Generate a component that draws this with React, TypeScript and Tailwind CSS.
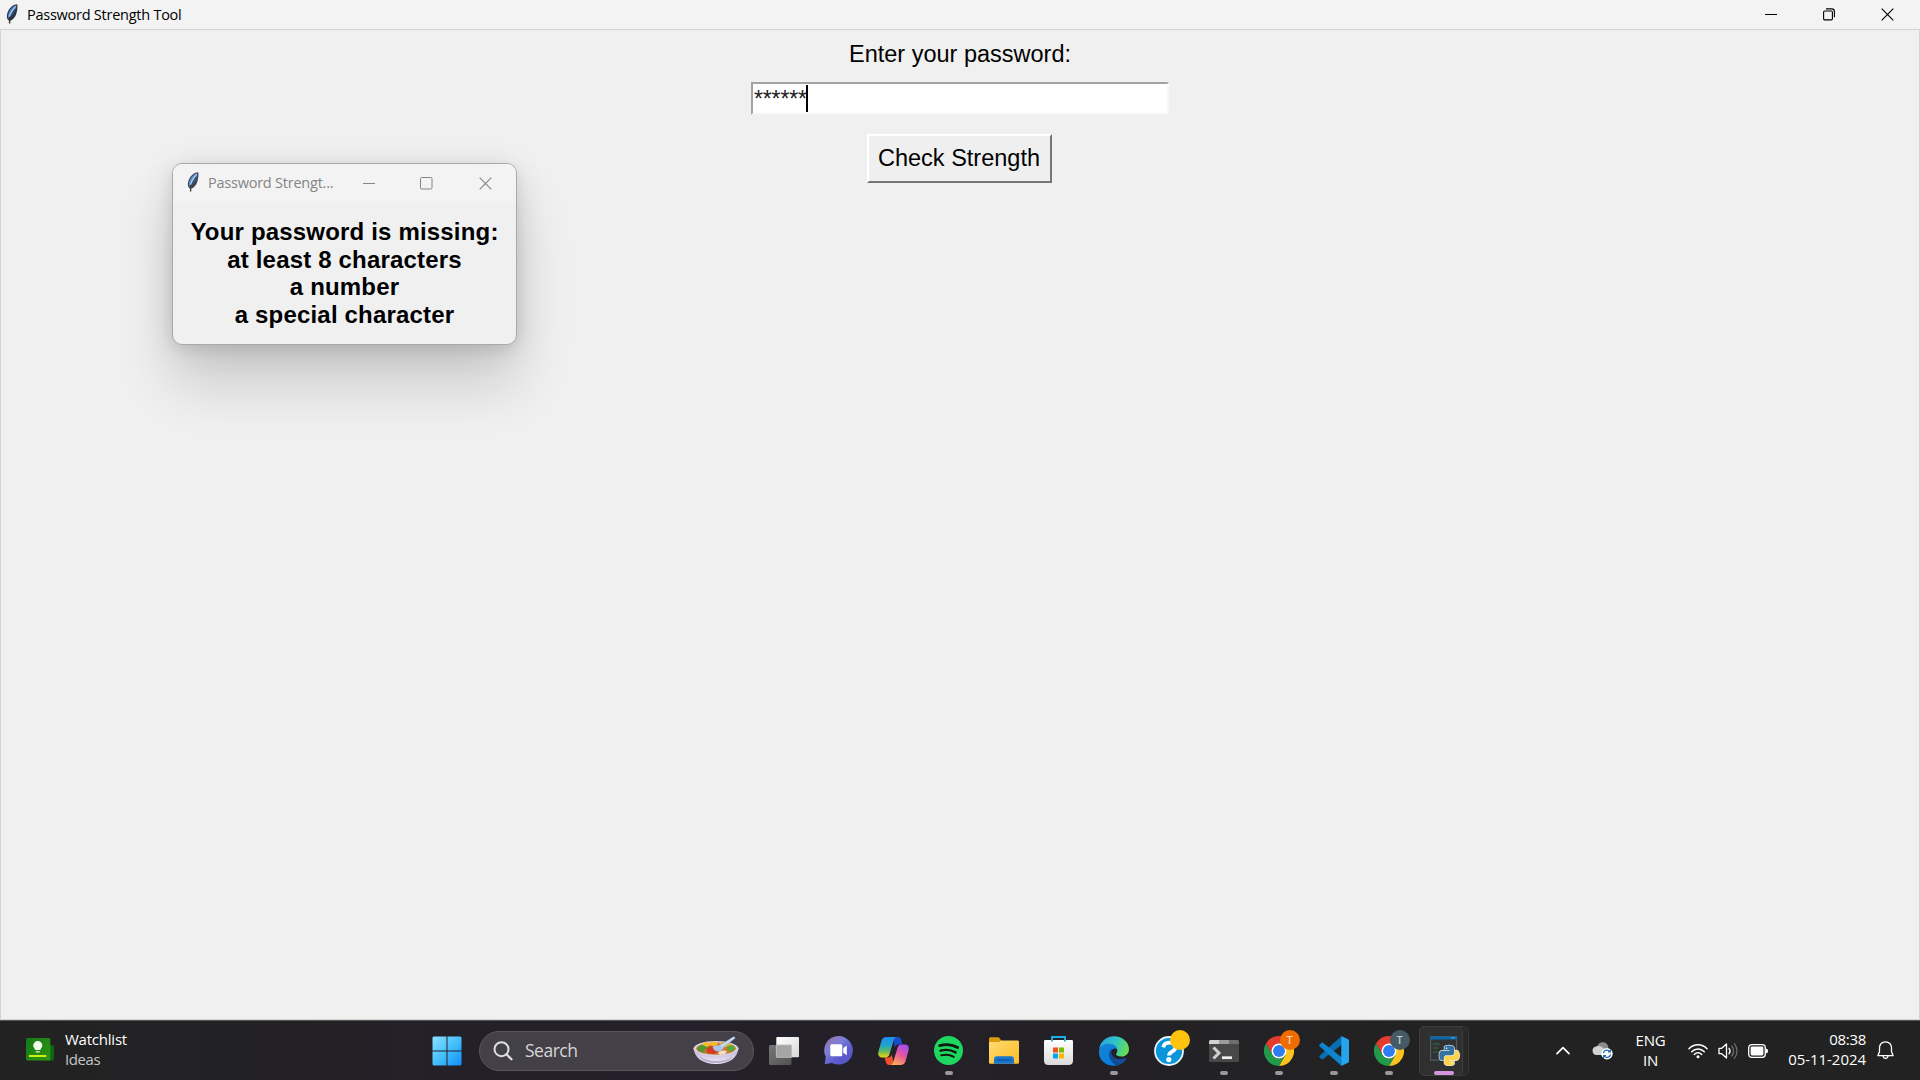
import type { ReactNode } from "react";

const UI = "font-['Open_Sans','Noto_Sans',sans-serif]";
const ARIAL = "font-['Liberation_Sans',Arial,sans-serif]";

function Feather() {
  return (
    <svg width="12" height="20" viewBox="0 0 12 20" className="block shrink-0">
      <path d="M11.300.3C8 .2 4 3 2 7.500.8 10.200.4 13 1.600 15.500L3.700 17c3-1 5.800-4 6.800-7.800.9-3.200 1.200-6.200.8-8.900z" fill="#2b3440" />
      <path d="M10.500 1.300C7.500 1.800 4.300 4.800 2.800 8.500c-.9 2.200-1 4.500-.3 6C5.500 13 9.800 7 10.500 1.300z" fill="#4a86cf" />
      <path d="M9.500 2.300C7.500 4.500 4.500 8.500 3.300 12.500" stroke="#b3cdea" strokeWidth="1.100" fill="none" />
      <path d="M9 5C7 9 5 12 3.500 14.500" stroke="#1f2a38" strokeWidth=".9" fill="none" />
      <path d="M3.600 13v6.500" stroke="#34312e" strokeWidth="1.400" />
    </svg>
  );
}

function Minimize() {
  return (
    <svg width="12" height="13" viewBox="0 0 12 13" className="block">
      <path d="M0 6.500h12" stroke="currentColor" />
    </svg>
  );
}
function Restore() {
  return (
    <svg width="12" height="13" viewBox="0 0 12 13" className="block" fill="none" stroke="currentColor" strokeWidth="1.100">
      <rect x=".6" y="3" width="8.800" height="8.900" rx="1.200" />
      <path d="M3 .9h5.700c1.800 0 2.700 1 2.700 2.700v5.700" />
    </svg>
  );
}
function Maximize() {
  return (
    <svg width="13" height="13" viewBox="0 0 13 13" className="block" fill="none" stroke="currentColor">
      <rect x=".5" y=".5" width="11.500" height="11.500" rx="1.200" />
    </svg>
  );
}
function Close() {
  return (
    <svg width="13" height="13" viewBox="0 0 13 13" className="block">
      <path d="M.7.700l11.600 11.600M12.300.700L.7 12.300" stroke="currentColor" strokeWidth="1.150" />
    </svg>
  );
}

function ResultDialog() {
  return (
    <section className="absolute left-[172px] top-[163px] h-[182px] w-[345px] rounded-[10px] border border-[#a9a9a9] bg-[#f0f0f0] shadow-[0_38px_56px_0_rgba(0,0,0,0.16),0_4px_32px_0_rgba(0,0,0,0.09),0_4px_14px_rgba(0,0,0,0.08)]">
      <header className="flex h-[39px] items-center rounded-t-[9px] bg-[#f3f3f3] pl-[14px] text-[#858585]">
        <div className="-mt-[3px] opacity-90"><Feather /></div>
        <span className={`-mt-[2px] ml-[9px] w-[148px] whitespace-nowrap text-[14.500px] tracking-[-0.230px] ${UI}`}>Password Strengt...</span>
        <div className="ml-[6px] flex w-[13px] shrink-0 justify-center"><Minimize /></div>
        <div className="ml-[45px] shrink-0"><Maximize /></div>
        <div className="ml-[46px] shrink-0"><Close /></div>
      </header>
      <p className={`-mx-1 pt-[15px] text-center text-[24px] font-bold leading-[27.600px] tracking-[0.180px] text-black ${ARIAL}`}>
        Your password is missing:<br />at least 8 characters<br />a number<br />a special character
      </p>
    </section>
  );
}

function Cell({ children, running }: { children: ReactNode; running?: boolean }) {
  return (
    <div className="relative flex h-[60px] w-[55px] shrink-0 items-center justify-center">
      {children}
      {running && <span className="absolute bottom-[6px] left-[24px] h-[4px] w-[8px] rounded-full bg-[#9a989d]" />}
    </div>
  );
}

function WatchlistIcon() {
  return (
    <svg width="28" height="23" viewBox="0 0 28 23" className="block">
      <rect x="20" y="7" width="8" height="15.500" rx="1.500" fill="#0c6614" />
      <rect width="24.300" height="22.500" rx="1.500" fill="url(#wl)" />
      <path d="M11.700 3a4.600 4.600 0 0 1 4.600 4.600c0 2-1.500 2.700-2 4.300H9.200c-.5-1.600-2-2.300-2-4.300A4.600 4.600 0 0 1 11.700 3z" fill="#effbe9" />
      <path d="M9.700 13.800h4" stroke="#d9f3cf" strokeWidth="1.300" />
      <path d="M3 18h17.200" stroke="#d2f010" strokeWidth="2" />
      <defs>
        <linearGradient id="wl" x1="0" y1="0" x2="1" y2="1"><stop stopColor="#127a16" /><stop offset="1" stopColor="#349510" /></linearGradient>
      </defs>
    </svg>
  );
}

function StartIcon() {
  return (
    <svg width="30" height="30" viewBox="0 0 30 30" className="block">
      <defs>
        <linearGradient id="st" x1="0" y1="0" x2="30" y2="30" gradientUnits="userSpaceOnUse"><stop stopColor="#8ee2ff" /><stop offset=".5" stopColor="#45c0fb" /><stop offset="1" stopColor="#0b8cf8" /></linearGradient>
      </defs>
      <path d="M1.500.500H14.500V14.500H.5V1.500zM15.500.500h13l1 1v13h-14zM.5 15.500h14v14h-13l-1-1zM15.500 15.500h14v13l-1 1h-13z" fill="url(#st)" />
    </svg>
  );
}

function BowlIcon() {
  return (
    <svg width="46" height="29" viewBox="0 0 46 29" className="block">
      <defs>
        <linearGradient id="bw" x1="0" y1="0" x2="0" y2="1"><stop stopColor="#b4abc8" /><stop offset="1" stopColor="#f1ecfa" /></linearGradient>
      </defs>
      <path d="M.5 12C1 21 9 28 23 28s22-7 22.500-16z" fill="url(#bw)" />
      <path d="M5 19c4 7 12 8 18 8s13-1 17-6c-6 3-10 4-17 4S9 23 5 19z" fill="#9689b5" opacity=".6" />
      <ellipse cx="23" cy="12.500" rx="22.500" ry="7.500" fill="#d9d1e8" />
      <ellipse cx="23" cy="12.600" rx="19.800" ry="6.200" fill="#cf7a2b" />
      <path d="M4 12c3-3 7-4 10-4l2 3-5 3 2 3C8 16 5 15 4 12z" fill="#4c9a30" />
      <path d="M9 8.500L13 5.500l3 2 3-2.300 6 2-2 3-6-1-3 1.800z" fill="#f4bc2a" />
      <path d="M26 8l4-2.200 6 1 5 3-6 1.500-6-1z" fill="#efae27" />
      <path d="M34 10l6-1 2.500 3-3 3.500-5-.5z" fill="#5aa637" />
      <path d="M13 13l5-3 7 2 .5 4-5 2-6-1z" fill="#d33a28" />
      <path d="M25 17c1-2 6-3.500 9-2l-2 3-5 .7z" fill="#f5dfc9" />
      <path d="M19.500 11c2-2 6-1 8.500-2.500L40.500.500l2 1.500-11 9c-2 1.500-2 4-5 4.500-4 .5-6-1.500-7-4.500z" fill="#a9c4e8" />
      <path d="M28 10.500L41.500 1.300" stroke="#e6f0ff" strokeWidth="1" />
    </svg>
  );
}

function TaskViewIcon() {
  return (
    <svg width="30" height="28" viewBox="0 0 30 28" className="block">
      <defs>
        <linearGradient id="tv" x1="0" y1="0" x2="1" y2="1"><stop stopColor="#fff" /><stop offset="1" stopColor="#d8d8d8" /></linearGradient>
        <linearGradient id="tw" x1="0" y1="0" x2="1" y2="1"><stop stopColor="#777" /><stop offset="1" stopColor="#505050" /></linearGradient>
      </defs>
      <rect y="8" width="22.500" height="20" rx="1.500" fill="url(#tw)" />
      <rect x="7.300" width="22.700" height="20.300" rx="1" fill="url(#tv)" />
      <path d="M7.300 8h15.200v12.300H7.300z" fill="#a5a5a5" stroke="#bcbcbc" strokeWidth=".8" />
    </svg>
  );
}

function ChatIcon() {
  return (
    <svg width="29" height="29" viewBox="0 0 29 29" className="block">
      <defs>
        <linearGradient id="ch" x1=".1" y1=".1" x2=".8" y2=".9"><stop stopColor="#9872b0" /><stop offset=".35" stopColor="#7b80d8" /><stop offset=".7" stopColor="#5d5bd0" /><stop offset="1" stopColor="#5757c4" /></linearGradient>
      </defs>
      <path d="M14.500 0A14.300 14.300 0 1 1 8 27L.7 28.300 1.800 21A14.300 14.300 0 0 1 14.500 0z" fill="url(#ch)" />
      <rect x="6.300" y="8.300" width="12" height="12" rx="1.500" fill="#fff" />
      <path d="M19.300 12l3.500-2.500v9.700l-3.500-2.500z" fill="#fff" />
    </svg>
  );
}

function CopilotIcon() {
  return (
    <svg width="31" height="28" viewBox="0 0 31 28" className="block">
      <defs>
        <linearGradient id="c1" x1="0" y1="0" x2="0" y2="1"><stop stopColor="#1c8ef0" /><stop offset=".4" stopColor="#1fa3d0" /><stop offset=".68" stopColor="#5cb960" /><stop offset="1" stopColor="#f3d30e" /></linearGradient>
        <linearGradient id="c2" x1=".7" y1="0" x2=".2" y2="1"><stop stopColor="#a44df0" /><stop offset=".45" stopColor="#e2569f" /><stop offset="1" stopColor="#ffb052" /></linearGradient>
      </defs>
      <path d="M15 0h5c2 0 2.800 1.200 3.300 3l1.200 4.500h-4c-2 0-3 1-3.700 3z" fill="#194cc8" />
      <path d="M16 28h-5c-2 0-2.600-1.300-3.200-3.200L6.500 20.500H10c2.200 0 3.200-1 3.900-3z" fill="#f1502f" />
      <path d="M8.500 0h9.800c-1.700.7-2.400 2.400-3 4.600l-4 13.200c-.7 2-2 2.700-4 2.700H4C.8 20.500-.4 18 .4 14.700L3.400 4C4.200 1.300 5.800 0 8.500 0z" fill="url(#c1)" />
      <path d="M22.500 28h-9.800c1.700-.7 2.400-2.400 3-4.600l4-13.200c.7-2 2-2.700 4-2.700H27c3.200 0 4.400 2.500 3.600 5.800l-3 10.700c-.8 2.700-2.400 4-5.100 4z" fill="url(#c2)" />
    </svg>
  );
}

function SpotifyIcon() {
  return (
    <svg width="29" height="29" viewBox="0 0 29 29" className="block" fill="none" stroke="#10170f" strokeLinecap="round">
      <circle cx="14.500" cy="14.500" r="14.500" fill="#1ed760" stroke="none" />
      <path d="M5.700 9.600c6-1.600 13-.9 18 1.900" strokeWidth="2.800" />
      <path d="M6.600 14.700c5.300-1.500 10.700-.7 15 1.700" strokeWidth="2.400" />
      <path d="M7.300 19.300c4.700-1.100 8.800-.6 12.500 1.500" strokeWidth="2" />
    </svg>
  );
}

function ExplorerIcon() {
  return (
    <svg width="30" height="27" viewBox="0 0 30 27" className="block">
      <defs>
        <linearGradient id="ex" x1="0" y1="0" x2="1" y2="1"><stop stopColor="#ffdc70" /><stop offset="1" stopColor="#fbbb27" /></linearGradient>
      </defs>
      <path d="M0 2C0 .8.600.300 1.600.300h7c1 0 1.500.4 2.200 1.200L12.600 4v5H0z" fill="#dc9b0c" />
      <path d="M0 5h10l2.500-1.500H28.500c1 0 1.500.500 1.500 1.500v20.300c0 1-.5 1.500-1.500 1.500h-27C.5 26.800 0 26.300 0 25.300z" fill="url(#ex)" />
      <path d="M5 26.800v-4.300c0-2.200 1-3.200 3-3.200h14c2 0 3 1 3 3.200v4.300z" fill="#1777cf" />
      <path d="M8.500 23h13" stroke="#0b4790" strokeWidth="1.200" strokeLinecap="round" />
    </svg>
  );
}

function StoreIcon() {
  return (
    <svg width="29" height="29" viewBox="0 0 29 29" className="block">
      <defs>
        <linearGradient id="sr" x1="0" y1="0" x2="0" y2="1"><stop stopColor="#fff" /><stop offset="1" stopColor="#dadada" /></linearGradient>
      </defs>
      <path d="M0 5.500C0 4.500.500 4 1.500 4h26c1 0 1.500.500 1.500 1.500v19c0 3-1.500 4.500-4.500 4.500h-20C1.500 29 0 27.500 0 24.500z" fill="url(#sr)" />
      <path d="M8 5.500V1h13v4.500" fill="none" stroke="#1dafe3" strokeWidth="1.900" />
      <path d="M9 11.500h5v5H9z" fill="#f25022" /><path d="M15 11.500h5v5h-5z" fill="#7fba00" />
      <path d="M9 17.500h5v5H9z" fill="#00a4ef" /><path d="M15 17.500h5v5h-5z" fill="#ffb900" />
    </svg>
  );
}

function EdgeIcon() {
  return (
    <svg width="30" height="30" viewBox="0 0 30 30" className="block">
      <defs>
        <linearGradient id="e1" x1="0" y1=".3" x2="1" y2=".6"><stop stopColor="#2aa5e0" /><stop offset=".5" stopColor="#30c3c8" /><stop offset="1" stopColor="#69e04c" /></linearGradient>
        <linearGradient id="e2" x1="0" y1="0" x2=".6" y2="1"><stop stopColor="#1484d4" /><stop offset="1" stopColor="#087ddc" /></linearGradient>
      </defs>
      <path d="M.3 12.500C1.500 5.300 7.500.2 15 .2c8.500 0 15 6 15 13 0 4.500-3.500 7.300-7.500 7.300-3.500 0-5.500-1-5.500-2.200 0-.8 1.300-1.500 1.300-3.800 0-3-3.800-5.600-8.300-5.600-4 0-7.500 1.600-9.700 3.600z" fill="url(#e1)" />
      <path d="M.2 13.500C1.500 9.500 6 7.500 10.500 7.700c4 .2 7.300 2.300 7.800 5.500-3-2-7.500.5-7.500 5.800 0 5 4 9.700 8 10.300C9 31.500-.7 25-.2 15z" fill="url(#e2)" />
      <path d="M12.500 13c-1.900 1.500-3 4-2.200 7.500 1.200 5 5.200 9 9.200 8.700 3.200-1 6-3.200 7.800-6.200.5-.8-.2-1.300-1-.9-6 2.700-13.800-.1-13.800-5.700 0-1.300.3-2.400 1-3.300z" fill="#124d9b" />
    </svg>
  );
}

function HelpIcon() {
  return (
    <span className="relative block">
      <svg width="30" height="30" viewBox="0 0 30 30" className="block">
        <circle cx="15" cy="15" r="14" fill="#0995da" stroke="#e9f5fb" strokeWidth="1.800" />
        <path d="M9.300 11.300c.6-3 2.700-4.600 6-4.600 3.700 0 6 1.800 6 4.800 0 4.500-6.300 3.900-6.300 8" fill="none" stroke="#fff" strokeWidth="3.800" />
        <circle cx="14.800" cy="23.600" r="2.600" fill="#fff" />
      </svg>
      <span className="absolute -top-[6px] left-[16px] size-5 rounded-full bg-[#ffc20e]" />
    </span>
  );
}

function TerminalIcon() {
  return (
    <svg width="30" height="22" viewBox="0 0 30 22" className="block">
      <rect width="30" height="22" rx="1.500" fill="#484848" />
      <path d="M0 4V1.500Q0 0 1.500 0H10v4z" fill="#d2d2d2" /><path d="M10 0h10v4H10z" fill="#9c9c9c" /><path d="M20 0h8.500Q30 0 30 1.500V4H20z" fill="#6e6e6e" />
      <path d="M4.500 7.500l5.500 5.500-5.500 5.500" fill="none" stroke="#d0d0d0" strokeWidth="3" />
      <path d="M13 17.700h10" stroke="#efefef" strokeWidth="2.700" />
    </svg>
  );
}

function ChromeIcon({ orange }: { orange?: boolean }) {
  return (
    <span className="relative block">
      <svg width="30" height="30" viewBox="0 0 48 48" className="block">
        <path d="M3.200 12A24 24 0 0 1 44.800 12H24L13.600 30z" fill="#e33b2e" />
        <path d="M44.800 12A24 24 0 0 1 24 48L34.400 30 24 12z" fill="#fcc31e" />
        <path d="M24 48A24 24 0 0 1 3.200 12L13.600 30A12 12 0 0 0 34.400 30z" fill="#239a4b" />
        <circle cx="24" cy="24" r="12" fill="#fff" />
        <circle cx="24" cy="24" r="9.500" fill="#2d7cf0" />
      </svg>
      <span className={`absolute -top-[6px] left-[16px] flex size-5 items-center justify-center rounded-full text-[11px] font-semibold leading-none ${UI} ${orange ? "bg-[#ef6c00] text-[#f9d7bb]" : "bg-[#455a64] text-[#c3cbcf]"}`}>T</span>
    </span>
  );
}

function CodeIcon() {
  return (
    <svg width="30" height="30" viewBox="0 0 30 30" className="block">
      <path d="M22.300.200L.8 19.500c-.7.600-.7 1.400 0 2l1.600 1.500c.5.500 1.200.5 1.800.1L23 8.500z" fill="#0a6eb5" />
      <path d="M22.300 29.800L.8 10.500c-.7-.6-.7-1.400 0-2L2.400 7c.5-.5 1.200-.5 1.800-.1L23 21.500z" fill="#0f84cc" />
      <path d="M22.300.100L29 3.200c.6.300 1 .8 1 1.500v20.600c0 .7-.4 1.200-1 1.500l-6.700 3.100z" fill="#25a6ec" />
    </svg>
  );
}

const SNAKE =
  "M14.25.18l.9.2.73.26.59.3.45.32.34.34.25.34.16.33.1.3.04.26.02.2-.01.13V8.5l-.05.63-.13.55-.21.46-.26.38-.3.31-.33.25-.35.19-.35.14-.33.1-.3.07-.26.04-.21.02H8.77l-.69.05-.59.14-.5.22-.41.27-.33.32-.27.35-.2.36-.15.37-.1.35-.07.32-.04.27-.02.21v3.06H3.17l-.21-.03-.28-.07-.32-.12-.35-.18-.36-.26-.36-.36-.35-.46-.32-.59-.28-.73-.21-.88-.14-1.05-.05-1.23.06-1.22.16-1.04.24-.87.32-.71.36-.57.4-.44.42-.33.42-.24.4-.16.36-.1.32-.05.24-.01h.16l.06.01h8.16v-.83H6.18l-.01-2.75-.02-.37.05-.34.11-.31.17-.28.25-.26.31-.23.38-.2.44-.18.51-.15.58-.12.64-.1.71-.06.77-.04.84-.02 1.27.05z";

function PythonTask() {
  return (
    <div className="relative h-[50px] w-[50px]">
      <span className="absolute inset-y-0 left-2 right-0 rounded-[5px] border border-[#363636] bg-[#292929]" />
      <span className="absolute inset-y-0 left-0 w-[44px] rounded-[5px] border border-[#3d3d3d] bg-[#303030]" />
      <svg width="30" height="30" viewBox="0 0 30 30" className="absolute left-[11px] top-[10px]">
        <path d="M.6.600h26v23.500H.6z" fill="#303235" stroke="#55585b" strokeWidth="1.200" />
        <path d="M0 .5h27V3.500H0z" fill="#0b68a9" />
        <path d="M21 2h4" stroke="#62a9d8" />
        <path d="M3 8h7M3 12h5M3 16h6" stroke="#32713a" strokeWidth="1.200" />
        <g transform="translate(9.300 9.500) scale(.83)">
          <path d={SNAKE} fill="#34719f" stroke="#e9edf0" strokeWidth="1.600" />
          <path d={SNAKE} fill="#fbd448" stroke="#e9edf0" strokeWidth="1.600" transform="rotate(180 12 12)" />
          <path d={SNAKE} fill="#34719f" />
          <path d={SNAKE} fill="#fbd448" transform="rotate(180 12 12)" />
          <circle cx="8.800" cy="3.200" r=".9" fill="#fff" />
          <circle cx="15.200" cy="20.800" r=".9" fill="#fff" />
        </g>
      </svg>
      <span className="absolute bottom-[1px] left-[15px] h-[4px] w-[20px] rounded-full bg-[#d595dd]" />
    </div>
  );
}

function CloudSync() {
  return (
    <svg width="21" height="19" viewBox="0 0 21 19" className="block">
      <path d="M5 6C6 2 9 .8 11.500 1.200c3 .4 4.500 2.600 5 5l-3 5z" fill="#8b8b8b" />
      <path d="M4.500 14A4.300 4.300 0 0 1 4 5.500C7.500 4 11 6 13 9l-1 5z" fill="#d2d2d2" />
      <circle cx="15" cy="12.700" r="5.700" fill="#fff" />
      <path d="M11.400 12a3.700 3.700 0 0 1 6.500-1.500M18.600 13.500a3.700 3.700 0 0 1-6.500 1.500M18.400 8.500v2.400H16M11.700 17v-2.400H14" fill="none" stroke="#1b69bd" strokeWidth="1.200" />
    </svg>
  );
}

function WifiIcon() {
  return (
    <svg width="20" height="16" viewBox="0 0 20 16" className="block" fill="none" stroke="#fff" strokeWidth="1.500" strokeLinecap="round">
      <path d="M1 5.700c5-5.300 13-5.300 18 0M3.700 8.700c3.500-3.700 9.100-3.700 12.600 0M6.300 11.400c2-2.100 5.400-2.100 7.400 0" />
      <circle cx="10" cy="13.700" r="1.500" fill="#fff" stroke="none" />
    </svg>
  );
}
function VolumeIcon() {
  return (
    <svg width="20" height="18" viewBox="0 0 20 18" className="block" fill="none" stroke="#fff" strokeWidth="1.300" strokeLinecap="round" strokeLinejoin="round">
      <path d="M1 6.300h2.700L8.500 2v14l-4.800-4.300H1z" />
      <path d="M11 6.300c1.300 1.600 1.300 3.800 0 5.400" />
      <path d="M13.700 4c2.300 3 2.300 7 0 10M16.300 1.700c3.600 4.400 3.600 10.200 0 14.600" stroke="#6c6c6c" />
    </svg>
  );
}
function BatteryIcon() {
  return (
    <svg width="20" height="14" viewBox="0 0 20 14" className="block">
      <rect x=".7" y=".7" width="16.600" height="12.600" rx="3" fill="none" stroke="#fff" strokeWidth="1.300" />
      <rect x="2.600" y="2.600" width="12.800" height="8.800" rx="1.300" fill="#fff" />
      <path d="M18 4.800c1.300 0 2 .6 2 2.200s-.7 2.200-2 2.200z" fill="#fff" />
    </svg>
  );
}
function BellIcon() {
  return (
    <svg width="17" height="19" viewBox="0 0 17 19" className="block" fill="none" stroke="#fff" strokeWidth="1.300" strokeLinejoin="round">
      <path d="M8.500.8c-3.600 0-6 2.600-6 6v3.600L.9 14.700h15.200l-1.600-4.300V6.800c0-3.400-2.400-6-6-6z" />
      <path d="M6 15c.3 1.700 1.200 2.500 2.500 2.500S10.700 16.700 11 15" />
    </svg>
  );
}

function Taskbar() {
  return (
    <footer className={`flex h-[60px] w-full items-center border-t border-[#555855] bg-linear-to-r from-[#222222] via-[#241f2a] via-35% to-[#222222] to-75% text-white ${UI}`}>
      <div className="flex h-full w-[419px] shrink-0 items-center pl-[26px]">
        <div className="-mt-[2px]"><WatchlistIcon /></div>
        <div className="-mt-[4px] ml-[11px] text-[15px] leading-5">
          <div className="tracking-[-0.230px]">Watchlist</div>
          <div className="tracking-[-0.400px] text-[#c5c5c5]">Ideas</div>
        </div>
      </div>
      <Cell><StartIcon /></Cell>
      <div className="ml-[5px] mr-[2px] flex h-[40px] w-[275px] shrink-0 items-center rounded-full border border-[#59565c] bg-[#434047] pl-[13px] pr-[14px]">
        <svg width="20" height="20" viewBox="0 0 20 20" className="block" fill="none" stroke="#e0e0e2" strokeWidth="2">
          <circle cx="8.500" cy="8.200" r="7" />
          <path d="M13.500 13.300l5 5" strokeWidth="2.300" strokeLinecap="round" />
        </svg>
        <span className="ml-[12px] text-[17.500px] leading-none tracking-[-0.500px] text-[#d6d5d7]">Search</span>
        <div className="ml-auto"><BowlIcon /></div>
      </div>
      <Cell><TaskViewIcon /></Cell>
      <Cell><ChatIcon /></Cell>
      <Cell><CopilotIcon /></Cell>
      <Cell running><SpotifyIcon /></Cell>
      <Cell><ExplorerIcon /></Cell>
      <Cell><StoreIcon /></Cell>
      <Cell running><EdgeIcon /></Cell>
      <Cell><HelpIcon /></Cell>
      <Cell running><TerminalIcon /></Cell>
      <Cell running><ChromeIcon orange /></Cell>
      <Cell running><CodeIcon /></Cell>
      <Cell running><ChromeIcon /></Cell>
      <Cell><PythonTask /></Cell>
      <div className="ml-auto flex items-center">
        <div className="flex w-[46px] justify-center">
          <svg width="14" height="9" viewBox="0 0 14 9" className="block" fill="none" stroke="#fff" strokeWidth="1.700" strokeLinecap="round" strokeLinejoin="round"><path d="M1 7.700l6-6 6 6" /></svg>
        </div>
        <div className="flex w-[33px] justify-center"><CloudSync /></div>
        <div className="-mt-[1px] w-[63px] text-center text-[15px] leading-5 tracking-[-0.200px]">ENG<br />IN</div>
        <div className="flex w-[31px] justify-center"><WifiIcon /></div>
        <div className="flex w-[29px] justify-center"><VolumeIcon /></div>
        <div className="flex w-[31px] justify-center"><BatteryIcon /></div>
        <div className="-mt-[4px] w-[93px] whitespace-nowrap text-right text-[15px] leading-5"><span className="tracking-[-0.300px]">08:38</span><br /><span className="tracking-[-0.040px]">05-11-2024</span></div>
        <div className="ml-[11px] mr-[26px]"><BellIcon /></div>
      </div>
    </footer>
  );
}

export default function App() {
  return (
    <div className="relative flex h-[1080px] w-[1920px] flex-col overflow-hidden bg-[#f0f0f0]">
      <header className="flex h-[29px] shrink-0 items-center bg-[#f3f3f3] pl-[6px] text-black">
        <div className="-mt-[1px]"><Feather /></div>
        <h1 className={`ml-[9px] mt-[1px] text-[14.500px] leading-none tracking-[-0.250px] ${UI}`}>Password Strength Tool</h1>
        <div className="ml-auto mr-[26px] flex items-center gap-[46px]">
          <Minimize /><Restore /><Close />
        </div>
      </header>
      <main className={`flex w-full flex-1 flex-col items-center border border-[#d3d3d3] text-black ${ARIAL}`}>
        <label className="mt-[11px] text-[23.500px] leading-[27px]">Enter your password:</label>
        <div className="mt-[14px] flex h-[33px] w-[418px] border-2 border-b-[#f5f5f5] border-l-[#a3a3a3] border-r-[#f7f7f7] border-t-[#a3a3a3] bg-white">
          <span className="ml-[1px] text-[23px] leading-[31px] tracking-[-0.150px] text-[#222]">******</span>
          <span className="-ml-[1px] mt-[1px] h-[27px] w-[2.500px] bg-black" />
        </div>
        <button className="mt-[19px] h-[49px] w-[185px] -translate-x-px border-2 border-b-[#767676] border-l-white border-r-[#767676] border-t-white bg-[#efefef] text-[23.500px]">
          Check Strength
        </button>
      </main>
      <Taskbar />
      <ResultDialog />
    </div>
  );
}
